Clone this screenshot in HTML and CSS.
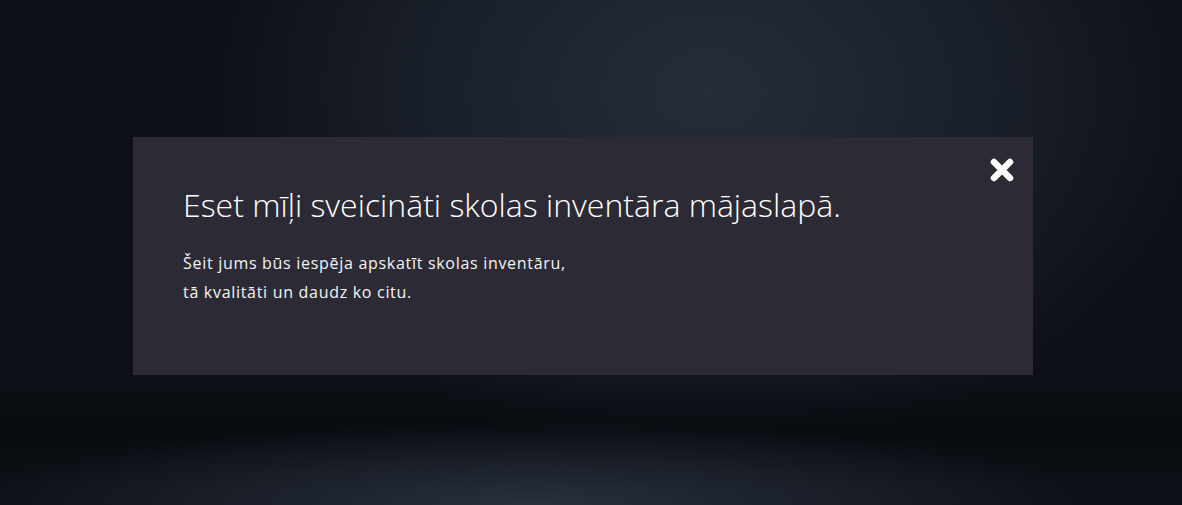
FILE: index.html
```html
<!DOCTYPE html>
<html lang="lv">
<head>
<meta charset="utf-8">
<title>Skolas inventārs</title>
<link rel="stylesheet" href="styles.css">
</head>
<body>
<div class="stage">
  <section class="welcome">
    <button class="close" aria-label="Aizvērt">
      <svg viewBox="0 0 26 26" width="26" height="26" aria-hidden="true">
        <path d="M5 5 L21 21 M21 5 L5 21" stroke="#fff" stroke-width="6.5" stroke-linecap="round" fill="none"/>
      </svg>
    </button>
    <h1 class="welcome-title">Eset mīļi sveicināti skolas inventāra mājaslapā.</h1>
    <p class="welcome-text">Šeit jums būs iespēja apskatīt skolas inventāru,<br>tā kvalitāti un daudz ko citu.</p>
  </section>
</div>
</body>
</html>
```
FILE: styles.css
```css
html, body {
  margin: 0;
  padding: 0;
  height: 100%;
}
body {
  font-family: "Open Sans", "Noto Sans", sans-serif;
  color: #fff;
  background-color: #0d1016;
  background-image:
    radial-gradient(ellipse 560px 85px at 45% 100%, rgba(42, 50, 64, 0.95), rgba(42, 50, 64, 0) 100%),
    linear-gradient(to bottom, rgba(0,0,0,0) 0px, rgba(0,0,0,0) 380px, rgba(5,7,11,0.55) 430px, rgba(0,0,0,0) 485px),
    radial-gradient(ellipse 500px 360px at 60% 18%, #262d3a 0%, #1a202a 55%, #0d1016 100%);
  overflow: hidden;
}
.stage {
  display: flex;
  padding: 137px 0 0 133px;
}
.welcome {
  position: relative;
  width: 900px;
  height: 238px;
  box-sizing: border-box;
  background: #2c2a35;
  padding: 42px 50px 0;
}
.close {
  position: absolute;
  top: 20px;
  right: 18px;
  width: 26px;
  height: 26px;
  padding: 0;
  border: 0;
  background: none;
  cursor: pointer;
}
.close svg { display: block; }
.welcome-title {
  margin: 0;
  font-weight: 300;
  font-size: 32px;
  line-height: 52px;
  letter-spacing: 0;
}
.welcome-text {
  margin: 18px 0 0;
  font-size: 16px;
  font-weight: 400;
  line-height: 29px;
  letter-spacing: 0.7px;
  color: #f4f4f4;
}
```
